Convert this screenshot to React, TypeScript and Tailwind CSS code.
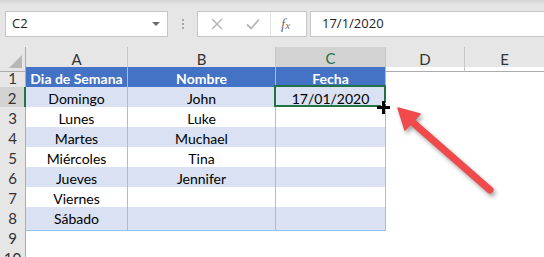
import React from "react";

const rows: [string, string, string][] = [
  ["Domingo", "John", "17/01/2020"],
  ["Lunes", "Luke", ""],
  ["Martes", "Muchael", ""],
  ["Miércoles", "Tina", ""],
  ["Jueves", "Jennifer", ""],
  ["Viernes", "", ""],
  ["Sábado", "", ""],
];

const cols = "grid grid-cols-[26px_102px_148px_110px_79px_1fr]";

export default function App() {
  return (
    <div className="relative w-[544px] h-[257px] overflow-hidden bg-white font-['Lato',sans-serif] text-[14px] text-black">
      {/* Formula bar */}
      <div className="h-[47px] bg-[linear-gradient(#d4d4d4_0px,#e6e6e6_5px)] flex items-start pt-[11px] font-['Open_Sans',sans-serif]">
        <div className="ml-[5px] w-[163px] h-[26px] bg-white border border-[#c6c6c6] flex items-center pl-[6px] pr-[7px] text-[13px] text-[#222]">
          <span className="flex-1">C2</span>
          <span className="w-0 h-0 border-l-[4px] border-r-[4px] border-t-[4px] border-l-transparent border-r-transparent border-t-[#6b6b6b]" />
        </div>
        <div className="ml-[14px] mt-[8px] flex flex-col gap-[2px]">
          <span className="w-[2px] h-[2px] bg-[#a6a6a6]" />
          <span className="w-[2px] h-[2px] bg-[#a6a6a6]" />
          <span className="w-[2px] h-[2px] bg-[#a6a6a6]" />
        </div>
        <div className="ml-[13px] w-[110px] h-[26px] bg-white border border-[#c6c6c6] flex items-center">
          <svg width="12" height="12" viewBox="0 0 12 12" className="ml-[13px]">
            <path d="M1 1 L11 11 M11 1 L1 11" stroke="#b8b8b8" strokeWidth="1.5" />
          </svg>
          <svg width="14" height="12" viewBox="0 0 14 12" className="ml-[23px]">
            <path d="M1 6.5 L5 10.5 L13 1.5" stroke="#b8b8b8" strokeWidth="1.8" fill="none" />
          </svg>
          <span className="ml-[10px] h-full border-l border-[#e3e3e3]" />
          <span className="ml-[10px] font-['Liberation_Serif',serif] italic text-[15px] text-[#707070]">
            f<span className="text-[11px]">x</span>
          </span>
        </div>
        <div className="ml-[3px] flex-1 h-[26px] bg-white border border-[#c6c6c6] border-r-0 flex items-center pl-[11px] text-[13px] text-[#222]">
          17/1/2020
        </div>
      </div>

      {/* Column headers */}
      <div className={`${cols} h-[20px] bg-[#e6e6e6] text-[#333] text-[15px]`}>
        <div className="relative border-r border-b border-[#ababab]">
          <svg width="13" height="13" className="absolute right-[3px] bottom-[3px]" viewBox="0 0 13 13">
            <path d="M13 0 L13 13 L0 13 Z" fill="#b7b7b7" />
          </svg>
        </div>
        <div className="flex items-center justify-center border-r border-b border-r-[#c6c6c6] border-b-[#ababab]">A</div>
        <div className="flex items-center justify-center border-r border-b border-r-[#c6c6c6] border-b-[#ababab]">B</div>
        <div className="flex items-center justify-center bg-[#d2d2d2] border-r border-r-[#c6c6c6] border-b-2 border-b-[#217346] text-[#217346]">C</div>
        <div className="flex items-center justify-center border-r border-b border-r-[#c6c6c6] border-b-[#ababab]">D</div>
        <div className="flex items-center justify-center border-b border-b-[#ababab]">E</div>
      </div>

      {/* Row 1 : table header */}
      <div className={`${cols} h-[20px]`}>
        <div className="flex items-center justify-center bg-[#e6e6e6] border-r border-b border-r-[#ababab] border-b-[#d4d4d4] text-[#333] text-[15px]">1</div>
        <div className="flex items-center justify-center bg-[#4472c4] border-r border-b border-[#9bc2e6] font-bold text-white">Dia de Semana</div>
        <div className="flex items-center justify-center bg-[#4472c4] border-r border-b border-[#9bc2e6] font-bold text-white">Nombre</div>
        <div className="flex items-center justify-center bg-[#4472c4] border-r border-b border-[#9bc2e6] font-bold text-white">Fecha</div>
        <div />
        <div />
      </div>

      {/* Data rows */}
      {rows.map((r, i) => {
        const band = i % 2 === 0 ? "bg-[#d9e1f2]" : "bg-white";
        const sel = i === 0;
        return (
          <div key={i} className={`${cols} h-[20px]`}>
            <div
              className={`flex items-center justify-center border-b border-b-[#d4d4d4] text-[#333] text-[15px] ${
                sel ? "bg-[#d2d2d2] border-r-2 border-r-[#217346]" : "bg-[#e6e6e6] border-r border-r-[#ababab]"
              }`}
            >
              {i + 2}
            </div>
            <div className={`flex items-center justify-center border-r border-b border-[#9bc2e6] ${band}`}>{r[0]}</div>
            <div className={`flex items-center justify-center border-r border-b border-[#9bc2e6] ${band}`}>{r[1]}</div>
            <div className={`flex items-center justify-center border-r border-b border-[#9bc2e6] ${band}`}>{r[2]}</div>
            <div />
            <div />
          </div>
        );
      })}

      {/* Empty rows */}
      {[9, 10].map((n) => (
        <div key={n} className={`${cols} h-[20px]`}>
          <div className="flex items-center justify-center bg-[#e6e6e6] border-r border-b border-r-[#ababab] border-b-[#d4d4d4] text-[#333] text-[15px]">{n}</div>
        </div>
      ))}

      {/* Selected cell */}
      <div className="absolute left-[274px] top-[85px] w-[112px] h-[22px] border-2 border-[#217346]" />
      <div className="absolute left-[381px] top-[103px] w-[6px] h-[6px] bg-[#217346] border border-white" />

      {/* Crosshair cursor */}
      <div className="absolute left-[377px] top-[106px] w-[13px] h-[3px] bg-black" />
      <div className="absolute left-[382px] top-[101px] w-[3px] h-[13px] bg-black" />

      {/* Red arrow */}
      <svg
        className="absolute left-0 top-0 pointer-events-none drop-shadow-[2px_3px_2px_rgba(0,0,0,0.35)]"
        width="544"
        height="257"
        viewBox="0 0 544 257"
      >
        <line x1="410" y1="120" x2="490" y2="190" stroke="#f04a4a" strokeWidth="7" strokeLinecap="round" />
        <path d="M398 108 L420 114 L405 130 Z" fill="#f04a4a" stroke="#f04a4a" strokeWidth="1.5" strokeLinejoin="round" />
      </svg>
    </div>
  );
}
